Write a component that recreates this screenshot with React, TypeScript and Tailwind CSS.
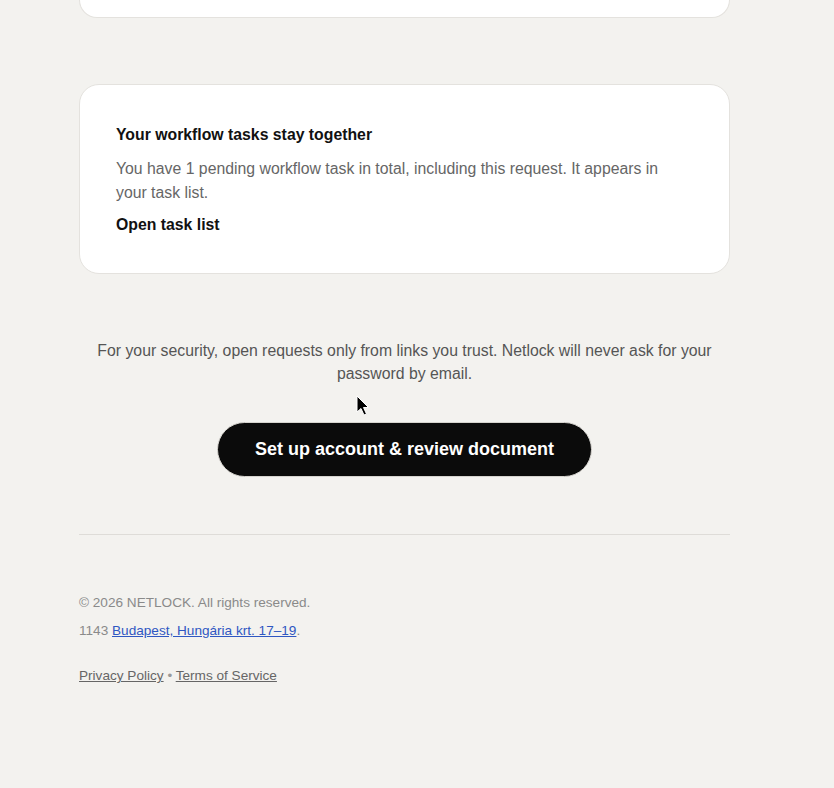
import React from "react";

export default function App() {
  return (
    <div
      className="relative min-h-[788px] w-full bg-[#f3f2ef] text-[#111]"
      style={{ fontFamily: '"Liberation Sans", Arial, sans-serif' }}
    >
      <div className="ml-[79px] w-[651px] flex flex-col">
        <div className="h-[18px] rounded-b-[20px] border border-t-0 border-[#e4e2de] bg-white" />

        <div className="mt-[66px] rounded-[20px] border border-[#e4e2de] bg-white px-[36px] pt-[39px] pb-[37px]">
          <div className="text-[15.8px] font-bold leading-[22px] text-[#111]">
            Your workflow tasks stay together
          </div>
          <p className="mt-[11px] text-[15.8px] leading-[24px] text-[#666] pr-[30px]">
            You have 1 pending workflow task in total, including this request. It appears in your task list.
          </p>
          <div className="mt-[9px] text-[15.8px] font-bold leading-[22px] text-[#111]">
            Open task list
          </div>
        </div>

        <p className="mt-[65px] px-[10px] text-center text-[15.8px] leading-[23px] text-[#555]">
          For your security, open requests only from links you trust. Netlock will never ask for your password by email.
        </p>

        <div className="mt-[37px] flex justify-center">
          <a className="flex h-[55px] w-[375px] items-center justify-center rounded-full border border-[#d6d4cf] bg-[#0b0b0b] text-[18px] font-bold text-white">
            Set up account &amp; review document
          </a>
        </div>

        <div className="mt-[57px] h-px bg-[#dedcd8]" />

        <div className="mt-[58px] text-[13.6px] leading-[20px] text-[#8a8a8a]">
          <div>© 2026 NETLOCK. All rights reserved.</div>
          <div className="mt-[8px]">
            1143{" "}
            <a className="text-[#2f57c2] underline">Budapest, Hungária krt. 17–19</a>.
          </div>
          <div className="mt-[25px] text-[#666]">
            <a className="underline">Privacy Policy</a>
            <span className="text-[#999]"> • </span>
            <a className="underline">Terms of Service</a>
          </div>
        </div>
      </div>

      <svg
        className="absolute left-[356px] top-[395px]"
        width="14"
        height="22"
        viewBox="0 0 14 22"
      >
        <path
          d="M1 1 L1 17 L5 13.5 L8 20 L10.5 19 L7.5 12.5 L12.5 12.5 Z"
          fill="#000"
          stroke="#fff"
          strokeWidth="1"
          strokeLinejoin="round"
        />
      </svg>
    </div>
  );
}
